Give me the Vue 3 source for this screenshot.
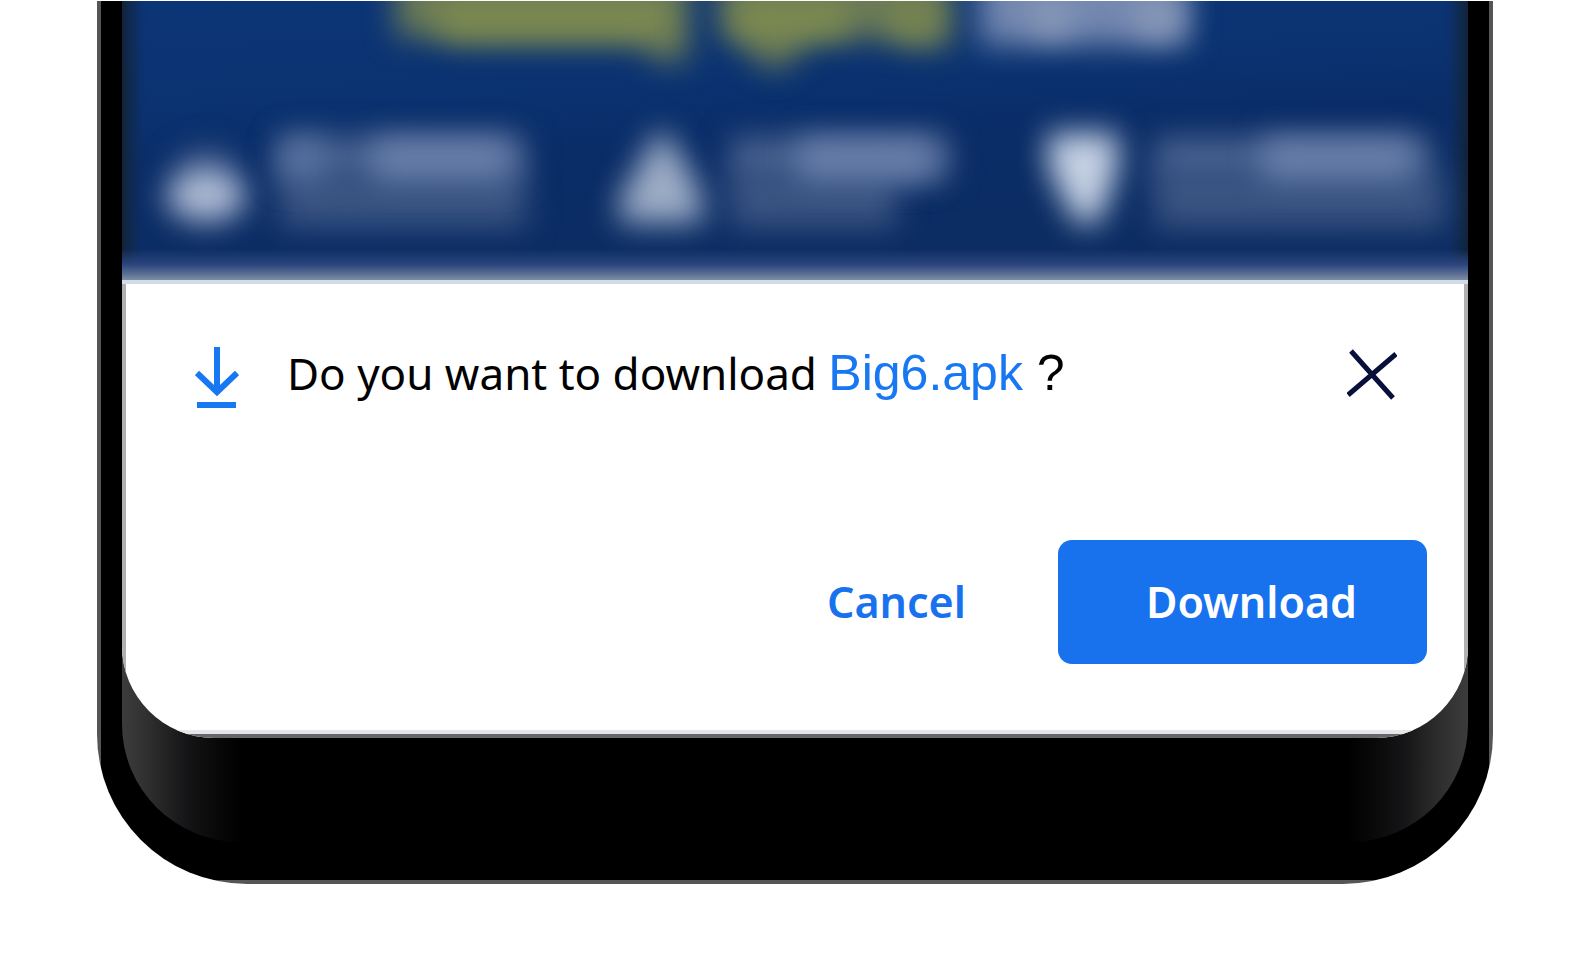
<script setup>
const fileName = 'Big6.apk'

const features = [
  { x: 158, top: 246, bottom: 246, strong: 92 },
  { x: 608, top: 220, bottom: 166, strong: 68 },
  { x: 1032, top: 276, bottom: 290, strong: 108 }
]
</script>

<template>
  <main class="page">
    <div class="phone">
      <div class="bezel">
        <div class="screen">
          <svg class="backdrop" viewBox="0 0 1346 279" aria-hidden="true">
            <defs>
              <linearGradient id="sky" x1="0" y1="0" x2="0.25" y2="1">
                <stop offset="0" stop-color="#0c3577" />
                <stop offset="0.35" stop-color="#0b3371" />
                <stop offset="0.6" stop-color="#0a2c67" />
                <stop offset="1" stop-color="#0c2d63" />
              </linearGradient>
              <linearGradient id="edge" x1="0" y1="0" x2="0" y2="1">
                <stop offset="0" stop-color="#2b457d" stop-opacity="0" />
                <stop offset="0.5" stop-color="#2b457d" />
                <stop offset="0.8" stop-color="#5a6d93" />
                <stop offset="1" stop-color="#7d8ea3" />
              </linearGradient>
              <linearGradient id="side">
                <stop offset="0" stop-color="#122338" />
                <stop offset="0.5" stop-color="#0f2a52" stop-opacity="0.7" />
                <stop offset="1" stop-color="#0c3070" stop-opacity="0" />
              </linearGradient>
              <filter id="soft" filterUnits="userSpaceOnUse" x="-60" y="-100" width="1466" height="460" color-interpolation-filters="sRGB">
                <feGaussianBlur stdDeviation="15" />
              </filter>
            </defs>
            <rect width="1346" height="279" fill="url(#sky)" />
            <rect width="26" height="279" fill="url(#side)" />
            <rect width="26" height="279" fill="url(#side)" transform="translate(1346 0) scale(-1 1)" />

            <g filter="url(#soft)">
              <path d="M274 -80H566V60H532L520 42H330L320 36H274Z" fill="#6b7a56" />
              <path d="M598 -80H828V46H790L760 36L688 40L664 66H640L622 44L598 34Z" fill="#6b7a56" />
              <path d="M858 -80H1066V44H858Z" fill="#7488b0" />
            </g>
            <g filter="url(#soft)">
              <rect x="316" y="2" width="230" height="32" fill="#7f8d4e" />
              <rect x="614" y="2" width="112" height="32" fill="#7f8d4e" />
              <rect x="766" y="2" width="50" height="32" fill="#78874f" />
              <rect x="910" y="0" width="38" height="34" fill="#8b9bb8" />
              <rect x="1014" y="0" width="44" height="34" fill="#8b9bb8" />
            </g>

            <g filter="url(#soft)">
              <ellipse cx="84" cy="172" rx="32" ry="24" fill="#405a8b" />
              <ellipse cx="84" cy="195" rx="40" ry="26" fill="#aebbd4" />
              <path d="M544 132Q564 160 580 196V222H498V196Q520 160 534 132Z" fill="#9dadc6" />
              <path d="M926 132H996V166L980 214Q964 234 950 214L926 166Z" fill="#c6d2e4" />
              <rect v-for="f in features" :key="'b' + f.x" :x="f.x" y="172" :width="f.bottom" height="54" fill="#3b5582" />
            </g>
            <g filter="url(#soft)">
              <rect v-for="f in features" :key="'t' + f.x" :x="f.x" y="136" :width="f.top" height="42" fill="#48628f" />
            </g>
            <g filter="url(#soft)">
              <rect x="158" y="138" width="44" height="40" fill="#5872a0" />
              <rect v-for="f in features" :key="'s' + f.x" :x="f.x + f.strong" y="138" :width="f.top - f.strong - 16" height="40" fill="#6a7fab" />
            </g>
            <rect y="248" width="1346" height="31" fill="url(#edge)" />
          </svg>

          <section class="dialog" role="dialog" aria-labelledby="question">
            <header class="prompt">
              <svg class="arrow" viewBox="0 0 44 62" aria-hidden="true">
                <path d="M22 0V44M2 26L22 45L42 26" />
                <path d="M2 58H41" />
              </svg>
              <h1 id="question" class="question">
                Do you want to download <a href="#" class="file">{{ fileName }}</a><span class="mark"> ?</span>
              </h1>
              <button type="button" class="close" aria-label="Close">
                <svg viewBox="0 0 50 56" aria-hidden="true">
                  <path d="M4 4L46 51M49 7L1 48" />
                </svg>
              </button>
            </header>
            <footer class="actions">
              <button type="button" class="cancel">Cancel</button>
              <button type="button" class="download">Download</button>
            </footer>
          </section>
        </div>
      </div>
    </div>
  </main>
</template>

<style>
body {
  background: #fff;
}
</style>

<style scoped>
.page {
  padding: 1px 92px 74px 97px;
  font-family: "Noto Sans", "Open Sans", sans-serif;
}

.phone {
  padding: 0 25px 42px;
  border-radius: 0 0 150px 150px;
  background:
    linear-gradient(#555, #555) left / 4px 100% no-repeat,
    linear-gradient(#555, #555) right / 4px 100% no-repeat,
    linear-gradient(#555, #555) bottom / 100% 4px no-repeat,
    #000;
}

.bezel {
  padding-bottom: 104px;
  border-radius: 0 0 118px 118px;
  background: linear-gradient(
    to right,
    #3c3c3c 0, #303030 24px, #232323 44px, #151517 64px, #080808 96px, #000 120px,
    #000 calc(100% - 120px), #080808 calc(100% - 96px), #151517 calc(100% - 64px),
    #232323 calc(100% - 44px), #303030 calc(100% - 24px), #3c3c3c 100%
  );
}

.screen {
  overflow: hidden;
  border-radius: 0 0 92px 92px;
}

.backdrop {
  display: block;
  width: 100%;
}

.dialog {
  padding: 67px 41px 74px 73px;
  background:
    linear-gradient(#d0dde8, #d0dde8) top / 100% 4px no-repeat,
    linear-gradient(#b0b0b0, #b0b0b0) left / 4px 100% no-repeat,
    linear-gradient(#b0b0b0, #b0b0b0) right / 4px 100% no-repeat,
    linear-gradient(#e6e6e8 50%, #66676a 50%) bottom / 100% 8px no-repeat,
    #fff;
}

.prompt {
  display: flex;
  align-items: flex-start;
}

.arrow {
  flex: none;
  width: 44px;
  height: 62px;
  margin-right: 48px;
  fill: none;
  stroke: #1877f2;
  stroke-width: 6;
}

.question {
  flex: 1;
  margin: 0;
  font-size: 44px;
  font-weight: 400;
  line-height: 52px;
  color: #000;
}

.file,
.mark {
  font-family: "Liberation Sans", Arial, sans-serif;
  font-size: 50px;
}

.file {
  color: #1877f2;
  text-decoration: none;
}

button {
  padding: 0;
  border: 0;
  background: none;
  font: inherit;
  cursor: pointer;
}

.close {
  flex: none;
  width: 50px;
  height: 56px;
  margin-right: 30px;
}

.close svg {
  display: block;
  fill: none;
  stroke: #07103a;
  stroke-width: 5;
}

.actions {
  display: flex;
  justify-content: flex-end;
  align-items: center;
  gap: 92px;
  margin-top: 131px;
}

.cancel,
.download {
  font-size: 43px;
  font-weight: 600;
  line-height: 60px;
}

.cancel {
  color: #1871ed;
}

.download {
  padding: 32px 70px 32px 88px;
  border-radius: 14px;
  background: #1871ed;
  color: #fff;
}
</style>
